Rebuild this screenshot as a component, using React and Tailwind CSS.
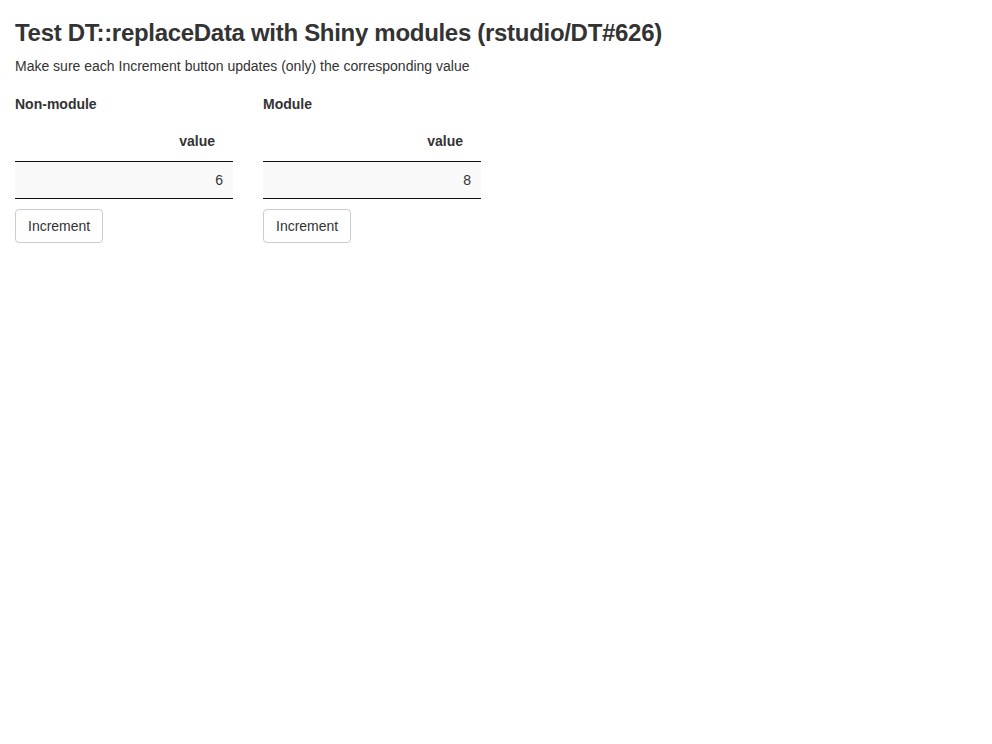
export default function App() {
  const cols = [
    { label: "Non-module", value: 6 },
    { label: "Module", value: 8 },
  ];
  return (
    <div
      className="min-h-[744px] bg-white px-[15px] text-[14px] leading-[20px] text-[#333]"
      style={{ fontFamily: '"Liberation Sans", Arial, sans-serif' }}
    >
      <h3 className="mt-[20px] mb-[10px] text-[24px] font-bold leading-[26.4px] tracking-[-0.3px]">
        Test DT::replaceData with Shiny modules (rstudio/DT#626)
      </h3>
      <p className="mb-[10px]">
        Make sure each Increment button updates (only) the corresponding value
      </p>
      <div className="flex gap-[30px]">
        {cols.map((c) => (
          <div key={c.label} className="w-[218px]">
            <div className="mt-[8px] font-bold">{c.label}</div>
            <table className="mt-[7px] w-full border-collapse">
              <thead>
                <tr>
                  <th className="border-b border-[#111] pt-[10px] pr-[18px] pb-[10px] pl-[10px] text-right font-bold">
                    value
                  </th>
                </tr>
              </thead>
              <tbody>
                <tr className="bg-[#f9f9f9]">
                  <td className="border-b border-[#111] py-[8px] pr-[10px] pl-[10px] text-right">
                    {c.value}
                  </td>
                </tr>
              </tbody>
            </table>
            <button className="mt-[10px] rounded-[4px] border border-[#ccc] bg-white px-[12px] py-[6px] text-[14px] leading-[20px] text-[#333]">
              Increment
            </button>
          </div>
        ))}
      </div>
    </div>
  );
}
